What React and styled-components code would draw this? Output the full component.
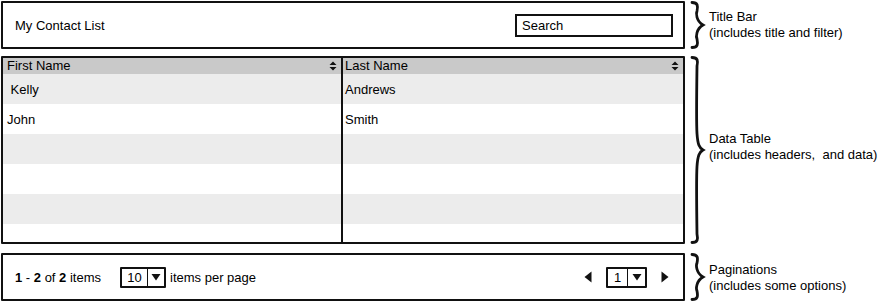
import styled, { createGlobalStyle } from 'styled-components';

const GlobalStyle = createGlobalStyle`
  body {
    margin: 0;
    background: #ffffff;
    font-family: "Liberation Sans", Arial, sans-serif;
    font-size: 13px;
    color: #000;
  }
`;

const Page = styled.div`
  display: flex;
  flex-direction: column;
  padding: 1px 0 0 1px;
  width: 883px;
  height: 304px;
  box-sizing: border-box;
`;

const Section = styled.div`
  display: flex;
  align-items: stretch;
  height: ${(p) => p.$height}px;
  margin-top: ${(p) => p.$gap || 0}px;
`;

const Panel = styled.div`
  width: 684px;
  box-sizing: border-box;
  border: 2px solid #111;
  border-radius: 1px;
  background: #fff;
  overflow: hidden;
`;

const TitlePanel = styled(Panel)`
  display: flex;
  align-items: center;
  justify-content: space-between;
  padding: 0 10px 0 12px;
`;

const Title = styled.div`
  font-size: 13px;
  padding-top: 1px;
`;

const SearchBox = styled.div`
  width: 158px;
  height: 23px;
  box-sizing: border-box;
  border: 2px solid #111;
  display: flex;
  align-items: center;
  padding: 0 5px;
  font-size: 13px;
  margin-top: 1px;
`;

const Brace = styled.svg`
  width: 16px;
  flex: none;
  margin-left: 5px;
`;

const Note = styled.div`
  align-self: center;
  margin-left: 3px;
  font-size: 13px;
  line-height: 16px;
  margin-top: ${(p) => p.$shift || 0}px;
`;

const TablePanel = styled(Panel)`
  display: grid;
  grid-template-columns: 338px 2px 1fr;
  grid-template-rows: 16px repeat(6, 30px);
`;

const HeadCell = styled.div`
  background: #c9c9c9;
  display: flex;
  align-items: center;
  justify-content: space-between;
  padding: 0 4px 0 ${(p) => p.$pad}px;
  font-size: 13px;
  line-height: 16px;
`;

const Cell = styled.div`
  background: ${(p) => (p.$alt ? '#ececec' : '#ffffff')};
  display: flex;
  align-items: center;
  padding-left: ${(p) => p.$pad}px;
  font-size: 13px;
  white-space: pre;
`;

const Divider = styled.div`
  grid-column: 2;
  grid-row: 1 / span 7;
  background: #111;
`;

const PagerPanel = styled(Panel)`
  display: flex;
  align-items: center;
  padding: 0 14px 0 12px;
`;

const Count = styled.div`
  font-size: 13px;
  b {
    font-weight: bold;
  }
`;

const Select = styled.div`
  display: flex;
  height: ${(p) => p.$h}px;
  box-sizing: border-box;
  border: 2px solid #111;
  border-radius: 1px;
  margin-left: ${(p) => p.$ml || 0}px;
  font-size: 13px;
`;

const SelectValue = styled.div`
  width: ${(p) => p.$w}px;
  display: flex;
  align-items: center;
  justify-content: center;
  border-right: 1.5px solid #111;
`;

const SelectArrow = styled.div`
  width: ${(p) => p.$w}px;
  display: flex;
  align-items: center;
  justify-content: center;
`;

const PerPage = styled.div`
  margin-left: 4px;
`;

const Spacer = styled.div`
  flex: 1;
`;

const ArrowBtn = styled.svg`
  width: 8px;
  height: 12px;
  margin: ${(p) => p.$m};
`;

const SortIcon = () => (
  <svg width="8" height="10" viewBox="0 0 8 10">
    <path d="M0.5 4 L4 0.5 L7.5 4 Z M0.5 6 L4 9.5 L7.5 6 Z" fill="#111" />
  </svg>
);

const DownTri = () => (
  <svg width="10" height="8" viewBox="0 0 10 8">
    <path d="M0.5 1 L9.5 1 L5 7.5 Z" fill="#111" />
  </svg>
);

const CurlyBrace = ({ h }) => {
  const m = h / 2;
  const d = `M2 1.5 C8 1.5 8 5 7 10 C6 ${m - 12} 6 ${m - 4} 13 ${m} C6 ${m + 4} 6 ${m + 12} 7 ${h - 10} C8 ${h - 5} 8 ${h - 1.5} 2 ${h - 1.5}`;
  return (
    <Brace viewBox={`0 0 16 ${h}`} height={h}>
      <path d={d} fill="none" stroke="#111" strokeWidth="2.8" strokeLinecap="round" />
    </Brace>
  );
};

const rows = [
  [' Kelly', 'Andrews'],
  ['John', 'Smith'],
  ['', ''],
  ['', ''],
  ['', ''],
  ['', ''],
];

export default function App() {
  return (
    <>
      <GlobalStyle />
      <Page>
        <Section $height={48}>
          <TitlePanel>
            <Title>My Contact List</Title>
            <SearchBox>Search</SearchBox>
          </TitlePanel>
          <CurlyBrace h={48} />
          <Note $shift={-1}>
            Title Bar
            <br />
            (includes title and filter)
          </Note>
        </Section>

        <Section $height={188} $gap={7}>
          <TablePanel>
            <HeadCell $pad={4} style={{ gridColumn: 1 }}>
              First Name
              <SortIcon />
            </HeadCell>
            <Divider />
            <HeadCell $pad={2} style={{ gridColumn: 3 }}>
              Last Name
              <SortIcon />
            </HeadCell>
            {rows.map(([first, last], i) => [
              <Cell key={`f${i}`} $alt={i % 2 === 0} $pad={4} style={{ gridColumn: 1 }}>
                {first}
              </Cell>,
              <Cell key={`l${i}`} $alt={i % 2 === 0} $pad={2} style={{ gridColumn: 3 }}>
                {last}
              </Cell>,
            ])}
          </TablePanel>
          <CurlyBrace h={188} />
          <Note $shift={-6}>
            Data Table
            <br />
            (includes headers,&nbsp; and data)
          </Note>
        </Section>

        <Section $height={48} $gap={9}>
          <PagerPanel>
            <Count>
              <b>1</b> - <b>2</b> of <b>2</b> items
            </Count>
            <Select $h={21} $ml={19}>
              <SelectValue $w={25}>10</SelectValue>
              <SelectArrow $w={16}>
                <DownTri />
              </SelectArrow>
            </Select>
            <PerPage>items per page</PerPage>
            <Spacer />
            <ArrowBtn viewBox="0 0 8 12" $m="0 14px 0 0">
              <path d="M7.5 0.5 L7.5 11.5 L0.5 6 Z" fill="#111" />
            </ArrowBtn>
            <Select $h={21}>
              <SelectValue $w={19}>1</SelectValue>
              <SelectArrow $w={17}>
                <DownTri />
              </SelectArrow>
            </Select>
            <ArrowBtn viewBox="0 0 8 12" $m="0 0 0 14px">
              <path d="M0.5 0.5 L0.5 11.5 L7.5 6 Z" fill="#111" />
            </ArrowBtn>
          </PagerPanel>
          <CurlyBrace h={48} />
          <Note $shift={2}>
            Paginations
            <br />
            (includes some options)
          </Note>
        </Section>
      </Page>
    </>
  );
}
